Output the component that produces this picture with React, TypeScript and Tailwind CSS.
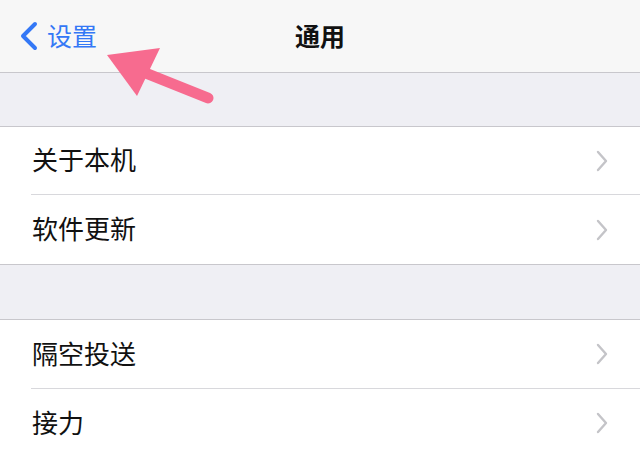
const font = { fontFamily: '"Noto Sans CJK SC", "Noto Sans", sans-serif' }

function Chevron() {
  return (
    <svg width="16" height="22" viewBox="0 0 16 22" className="shrink-0">
      <polyline points="4,2 12,11 4,20" fill="none" stroke="#c4c4c8" strokeWidth="2.4" strokeLinecap="round" strokeLinejoin="round" />
    </svg>
  )
}

function Row({ label, h, last }: { label: string; h: string; last?: boolean }) {
  return (
    <div className="bg-white">
      <div className={`flex items-center justify-between pl-[32px] pr-[30px] ${h}`}>
        <span className="text-[26px] leading-none text-[#111111] -mt-[3px]">{label}</span>
        <Chevron />
      </div>
      {!last && <div className="ml-[31px] h-px bg-[#d8d8dc]" />}
    </div>
  )
}

export default function App() {
  return (
    <div className="relative w-[640px] h-[457px] overflow-hidden bg-[#efeff4]" style={font}>
      {/* Nav bar */}
      <div className="h-[73px] bg-[#f7f7f7] border-b border-[#c8c7cc] flex items-center relative">
        <div className="flex items-center gap-[8px] pl-[19px] text-[#3478f6]">
          <svg width="20" height="30" viewBox="0 0 20 30" className="-mt-[1px]">
            <polyline points="16,3 4,15 16,27" fill="none" stroke="currentColor" strokeWidth="4" strokeLinecap="round" strokeLinejoin="round" />
          </svg>
          <span className="text-[25px] leading-none -mt-[1px]">设置</span>
        </div>
        <div className="absolute inset-0 flex items-center justify-center pointer-events-none">
          <span className="text-[25px] leading-none font-semibold text-[#111111] -mt-[1px]">通用</span>
        </div>
      </div>

      <div className="h-[53px]" />

      <div className="border-y border-[#c8c7cc]">
        <Row label="关于本机" h="h-[67px]" />
        <Row label="软件更新" h="h-[69px]" last />
      </div>

      <div className="h-[54px]" />

      <div className="border-t border-[#c8c7cc]">
        <Row label="隔空投送" h="h-[68px]" />
        <Row label="接力" h="h-[68px]" last />
      </div>

      {/* Pink annotation arrow */}
      <svg className="absolute left-0 top-0" width="640" height="457" viewBox="0 0 640 457">
        <line x1="208" y1="98" x2="128" y2="66" stroke="#f76b8f" strokeWidth="11" strokeLinecap="round" />
        <polygon points="107,55 160,48 137,96" fill="#f76b8f" />
      </svg>
    </div>
  )
}
